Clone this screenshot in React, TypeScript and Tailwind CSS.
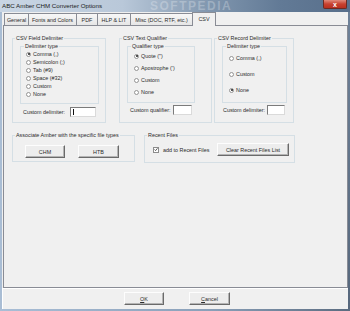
import React from "react";

type TabDef = { label: string; w: string; active?: boolean; noRight?: boolean; first?: boolean };

const tabs: TabDef[] = [
  { label: "General", w: "w-[25px]", first: true },
  { label: "Fonts and Colors", w: "w-[48px]" },
  { label: "PDF", w: "w-[21px]" },
  { label: "HLP & LIT", w: "w-[33px]" },
  { label: "Misc (DOC, RTF, etc.)", w: "w-[61px]", noRight: true },
  { label: "CSV", w: "w-[24px]", active: true },
];

function Radio({ checked = false }: { checked?: boolean }) {
  return (
    <span className="inline-flex h-[5px] w-[5px] shrink-0 items-center justify-center rounded-full border border-[#949494] bg-white">
      {checked && <span className="h-[2px] w-[2px] rounded-full bg-[#1e1e1e]" />}
    </span>
  );
}

function Option({ label, checked, row }: { label: string; checked?: boolean; row: string }) {
  return (
    <div className={`flex items-center gap-[2px] ${row}`}>
      <Radio checked={checked} />
      <span>{label}</span>
    </div>
  );
}

function Field({ w, caret }: { w: string; caret?: boolean }) {
  return (
    <div
      className={`flex h-[10px] items-center border border-t-[#7b7b7b] border-l-[#7b7b7b] border-r-[#dadada] border-b-[#dadada] bg-white ${w}`}
    >
      {caret && <span className="ml-[2px] h-[6px] w-[1px] bg-[#111]" />}
    </div>
  );
}

function Btn({ children, w }: { children: React.ReactNode; w: string }) {
  return (
    <button
      className={`flex h-[13px] items-center justify-center border border-t-[#fdfdfd] border-l-[#fdfdfd] border-r-[#6a6a6a] border-b-[#6a6a6a] bg-[#ededed] shadow-[inset_-1px_-1px_0_#b4b4b4] ${w}`}
    >
      {children}
    </button>
  );
}

export default function App() {
  return (
    <div className="flex h-[311px] w-[350px] flex-col overflow-hidden bg-[#8ea3bb] font-['Liberation_Sans',Arial,sans-serif] text-[5.4px] leading-[8px] text-[#2b2b2b]">
      {/* title bar */}
      <div className="relative flex h-[12px] shrink-0 items-center bg-[linear-gradient(90deg,#c9d6e4_0%,#b9c8d9_35%,#8096ae_60%,#627a96_80%,#586f8b_100%)] pl-[2px]">
        <span className="text-[6.2px] leading-[8px] text-[#1b1b1b]">ABC Amber CHM Converter Options</span>
        <span className="absolute left-[150px] top-0 text-[12px] font-bold leading-[12px] tracking-[1.5px] text-white/25">
          SOFTPEDIA
        </span>
        <div className="absolute right-[3px] top-0 flex h-[9px] w-[24px] items-center justify-center rounded-b-[2px] border border-t-0 border-[#6e2a22] bg-[linear-gradient(#e08a7b,#c8412f_50%,#b8301f)] text-[7px] font-bold leading-[7px] text-white">
          x
        </div>
      </div>

      <div className="flex h-[297px] shrink-0">
        <div className="w-[2px] bg-[#a9bdd4]" />
        <div className="flex w-[346px] flex-col bg-[#f0f0f0]">
          {/* tabs */}
          <div className="flex h-[13px] items-end pl-[2px]">
            {tabs.map((t) => (
              <div
                key={t.label}
                className={
                  t.active
                    ? `relative z-10 -mb-px flex h-[14px] items-center justify-center border border-b-0 border-[#898c95] bg-[#f0f0f0] pb-[2px] ${t.w}`
                    : `flex h-[12px] items-center justify-center border-t border-[#898c95] bg-[linear-gradient(#f7f7f7,#e6e6e6)] ${t.first ? "border-l" : ""} ${t.noRight ? "" : "border-r"} ${t.w}`
                }
              >
                <span className="whitespace-nowrap">{t.label}</span>
              </div>
            ))}
          </div>

          {/* panel */}
          <div className="ml-px h-[263px] w-[345px] border border-[#898c95] bg-[#f0f0f0] pl-[8px] pt-[8px]">
            <div className="flex">
              {/* CSV Field Delimiter */}
              <fieldset className="h-[89px] w-[94px] border border-[#d5dfe5]">
                <legend className="ml-[2px] px-[1px] leading-[8px]">CSV Field Delimiter</legend>
                <fieldset className="ml-[7px] h-[62px] w-[79px] border border-[#d5dfe5]">
                  <legend className="ml-[3px] px-[1px] leading-[8px]">Delimiter type</legend>
                  <div className="pl-[5px]">
                    <Option label="Comma (,)" checked row="h-[8px]" />
                    <Option label="Semicolon (;)" row="h-[8px]" />
                    <Option label="Tab (#9)" row="h-[8px]" />
                    <Option label="Space (#32)" row="h-[8px]" />
                    <Option label="Custom" row="h-[8px]" />
                    <Option label="None" row="h-[8px]" />
                  </div>
                </fieldset>
                <div className="mt-[3px] flex items-center gap-[5px] pl-[10px]">
                  <span>Custom delimiter:</span>
                  <Field w="w-[26px]" caret />
                </div>
              </fieldset>

              {/* CSV Text Qualifier */}
              <fieldset className="ml-[13px] h-[89px] w-[93px] border border-[#d5dfe5]">
                <legend className="ml-[2px] px-[1px] leading-[8px]">CSV Text Qualifier</legend>
                <fieldset className="ml-[7px] h-[61px] w-[68px] border border-[#d5dfe5]">
                  <legend className="ml-[3px] px-[1px] leading-[8px]">Qualifier type</legend>
                  <div className="pl-[6px]">
                    <Option label={'Quote (")'} checked row="h-[12px]" />
                    <Option label="Apostrophe (')" row="h-[12px]" />
                    <Option label="Custom" row="h-[12px]" />
                    <Option label="None" row="h-[12px]" />
                  </div>
                </fieldset>
                <div className="mt-[2px] flex items-center gap-[3px] pl-[10px]">
                  <span>Custom qualifier:</span>
                  <Field w="w-[19px]" />
                </div>
              </fieldset>

              {/* CSV Record Delimiter */}
              <fieldset className="ml-[2px] h-[89px] w-[80px] border border-[#d5dfe5]">
                <legend className="ml-[2px] px-[1px] leading-[8px]">CSV Record Delimiter</legend>
                <fieldset className="ml-[7px] h-[61px] w-[65px] border border-[#d5dfe5]">
                  <legend className="ml-[3px] px-[1px] leading-[8px]">Delimiter type</legend>
                  <div className="pl-[6px]">
                    <Option label="Comma (,)" row="h-[16px]" />
                    <Option label="Custom" row="h-[16px]" />
                    <Option label="None" checked row="h-[16px]" />
                  </div>
                </fieldset>
                <div className="mt-[2px] flex items-center gap-[2px] pl-[8px]">
                  <span className="whitespace-nowrap">Custom delimiter:</span>
                  <Field w="w-[18px]" />
                </div>
              </fieldset>
            </div>

            <div className="mt-[8px] flex">
              <fieldset className="h-[31px] w-[123px] border border-[#d5dfe5]">
                <legend className="ml-[2px] px-[1px] leading-[8px]">Associate Amber with the specific file types</legend>
                <div className="ml-[12px] mt-[6px] flex gap-[13px]">
                  <Btn w="w-[40px]">CHM</Btn>
                  <Btn w="w-[41px]">HTB</Btn>
                </div>
              </fieldset>

              <fieldset className="ml-[9px] h-[32px] w-[151px] border border-[#d5dfe5]">
                <legend className="ml-[2px] px-[1px] leading-[8px]">Recent Files</legend>
                <div className="mt-[4px] flex items-center pl-[8px] pr-[5px]">
                  <span className="flex h-[6px] w-[6px] items-center justify-center border border-[#8c8c8c] bg-white">
                    <svg viewBox="0 0 6 6" className="h-[5px] w-[5px]">
                      <path d="M0.8 3 L2.4 4.6 L5.2 1.2" fill="none" stroke="#222" strokeWidth="1.1" />
                    </svg>
                  </span>
                  <span className="ml-[4px]">add to Recent Files</span>
                  <div className="ml-auto">
                    <Btn w="w-[72px]">Clear Recent Files List</Btn>
                  </div>
                </div>
              </fieldset>
            </div>
          </div>

          {/* bottom buttons */}
          <div className="flex h-[21px] border-l border-t border-white pl-[121px] pt-[3px]">
            <Btn w="w-[40px]">
              <span>
                <u>O</u>K
              </span>
            </Btn>
            <div className="ml-[25px]">
              <Btn w="w-[41px]">
                <span>
                  <u>C</u>ancel
                </span>
              </Btn>
            </div>
          </div>
        </div>
        <div className="w-[2px] bg-[linear-gradient(#6f8299,#56677c)]" />
      </div>
      <div className="h-[2px] shrink-0 bg-[linear-gradient(90deg,#a9bed6,#8aa0b9_60%,#5b6c80)]" />
    </div>
  );
}
